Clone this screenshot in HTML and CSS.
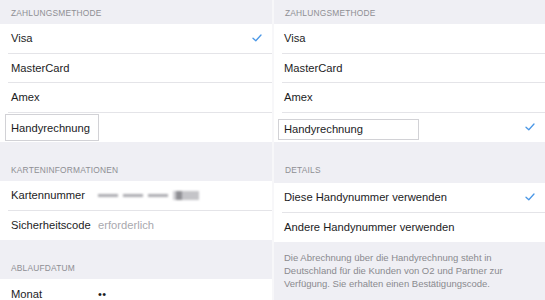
FILE: index.html
```html
<!DOCTYPE html>
<html lang="de">
<head>
  <meta charset="UTF-8">
  <title>Zahlungsmethode</title>
  <link rel="stylesheet" href="styles.css">
</head>
<body>
  <div class="screens">

    <!-- Left: card payment -->
    <div class="panel">
      <div class="head head-top">Zahlungsmethode</div>
      <div class="group">
        <div class="row">
          <span class="label">Visa</span>
          <svg class="check" width="10" height="8" viewBox="0 0 10 8"><path d="M1 4.2 L3.8 6.8 L9 1" fill="none" stroke="#4a97e6" stroke-width="1.3" stroke-linecap="round" stroke-linejoin="round"/></svg>
        </div>
        <div class="row"><span class="label">MasterCard</span></div>
        <div class="row"><span class="label">Amex</span></div>
        <div class="row"><span class="field field-left">Handyrechnung</span></div>
      </div>

      <div class="head head-section">Karteninformationen</div>
      <div class="group">
        <div class="row">
          <span class="key">Kartennummer</span>
          <span class="masked">
            <i class="dash"></i><i class="dash"></i><i class="dash"></i><i class="blob"></i>
          </span>
        </div>
        <div class="row">
          <span class="key">Sicherheitscode</span>
          <span class="hint">erforderlich</span>
        </div>
      </div>

      <div class="head head-section">Ablaufdatum</div>
      <div class="group">
        <div class="row">
          <span class="key">Monat</span>
          <span class="dots">••</span>
        </div>
      </div>
    </div>

    <!-- Right: phone bill -->
    <div class="panel">
      <div class="head head-top">Zahlungsmethode</div>
      <div class="group">
        <div class="row"><span class="label">Visa</span></div>
        <div class="row"><span class="label">MasterCard</span></div>
        <div class="row"><span class="label">Amex</span></div>
        <div class="row">
          <span class="field field-right">Handyrechnung</span>
          <svg class="check" width="10" height="8" viewBox="0 0 10 8"><path d="M1 4.2 L3.8 6.8 L9 1" fill="none" stroke="#4a97e6" stroke-width="1.3" stroke-linecap="round" stroke-linejoin="round"/></svg>
        </div>
      </div>

      <div class="head head-details">Details</div>
      <div class="group">
        <div class="row">
          <span class="label">Diese Handynummer verwenden</span>
          <svg class="check" width="10" height="8" viewBox="0 0 10 8"><path d="M1 4.2 L3.8 6.8 L9 1" fill="none" stroke="#4a97e6" stroke-width="1.3" stroke-linecap="round" stroke-linejoin="round"/></svg>
        </div>
        <div class="row"><span class="label">Andere Handynummer verwenden</span></div>
      </div>
      <p class="footnote">Die Abrechnung über die Handyrechnung steht in Deutschland für die Kunden von O2 und Partner zur Verfügung. Sie erhalten einen Bestätigungscode.</p>
    </div>

  </div>
</body>
</html>
```

FILE: styles.css
```css
/* Basic reset */
* {
  box-sizing: border-box;
  margin: 0;
  padding: 0;
}

body {
  background-color: #f7f7f9;
  font-family: "Liberation Sans", Arial, sans-serif;
  color: #1c1c1e;
  height: 300px;
  overflow: hidden;
}

.screens {
  display: flex;
  gap: 2px;
  height: 300px;
}

.panel {
  flex: 0 0 272px;
  background-color: #efeff4;
  overflow: hidden;
}

.panel + .panel {
  flex: 1;
}

/* section headers */
.head {
  display: flex;
  align-items: flex-end;
  padding: 0 11px;
  font-size: 8.4px;
  letter-spacing: 0.2px;
  text-transform: uppercase;
  color: #8e8e93;
}

.head-top {
  height: 24px;
  padding-bottom: 6px;
}

.head-section {
  height: 39px;
  padding-bottom: 6px;
}

.head-details {
  height: 41px;
  padding-bottom: 8px;
}

/* white list groups */
.group {
  background-color: #fff;
}

.row {
  height: 29.5px;
  margin-left: 8px;
  padding: 0 10px 0 3px;
  display: flex;
  align-items: center;
  border-bottom: 1px solid #e4e4e8;
  font-size: 11.2px;
}

.row:last-child {
  border-bottom: none;
}

.panel + .panel .row {
  padding-left: 2px;
}

.label {
  flex: 1;
}

.check {
  flex: none;
}

/* highlighted handyrechnung field */
.field {
  border: 1px solid #d2d2d6;
  margin-left: -6px;
  padding-left: 5px;
  display: flex;
  align-items: center;
}

.field-left {
  width: 94px;
  height: 27px;
  margin-top: 1px;
}

.field-right {
  width: 141px;
  height: 21px;
  margin-top: 4px;
  margin-right: auto;
}

/* key / value rows */
.key {
  width: 87px;
  flex: none;
}

.hint {
  color: #a9a9ae;
}

.dots {
  font-size: 11px;
  letter-spacing: 0.5px;
}

.masked {
  display: flex;
  align-items: center;
  gap: 5px;
  filter: blur(0.8px);
}

.dash {
  display: block;
  width: 20px;
  height: 2.5px;
  background-color: #adadb2;
}

.blob {
  display: block;
  width: 26px;
  height: 9px;
  background: linear-gradient(90deg, #cfcfd3 0 10%, #8f8f94 10% 35%, #c4c4c8 35% 100%);
}

.footnote {
  padding: 9px 28px 0 10px;
  font-size: 9.5px;
  line-height: 13px;
  color: #8a8a8f;
}
```
